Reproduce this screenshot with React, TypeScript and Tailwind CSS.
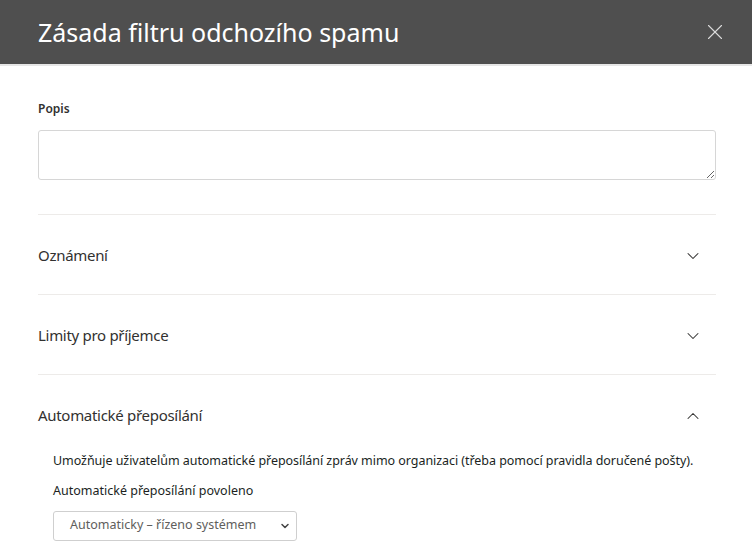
import { ChevronDown, ChevronUp, X } from "lucide-react";

const font = { fontFamily: '"Noto Sans", "Open Sans", sans-serif' };

function Section({ title, open }: { title: string; open?: boolean }) {
  return (
    <div className="flex h-[80px] items-center justify-between border-t border-[#edebe9] pt-[2px]">
      <span className="text-[15px] tracking-[-0.3px] text-[#323130]">{title}</span>
      {open ? (
        <ChevronUp className="mr-[13px] h-5 w-5 text-[#323130]" strokeWidth={1.25} />
      ) : (
        <ChevronDown className="mr-[13px] h-5 w-5 text-[#323130]" strokeWidth={1.25} />
      )}
    </div>
  );
}

export default function App() {
  return (
    <div className="h-[545px] w-[752px] overflow-hidden bg-white" style={font}>
      <div className="flex h-[64px] items-center justify-between bg-[#4f4f4f] pl-[38px] pr-[24px]">
        <h1 className="text-[25px] leading-none text-white">Zásada filtru odchozího spamu</h1>
        <X className="h-[26px] w-[26px] text-[#dcdcdc]" strokeWidth={1} />
      </div>
      <div className="h-[2px] bg-[#e6e6e6]" />

      <div className="pl-[38px] pr-[36px] pt-[34px]">
        <label className="block text-[12px] font-semibold text-[#323130]">Popis</label>
        <textarea className="mt-[12px] block h-[50px] w-full rounded-[3px] border border-[#d6d6d6] outline-none" />

        <div className="mt-[34px]">
          <Section title="Oznámení" />
          <Section title="Limity pro příjemce" />
          <Section title="Automatické přeposílání" open />
        </div>

        <div className="-mt-[2px] pl-[15px]">
          <p className="whitespace-nowrap text-[12.5px] tracking-[-0.05px] text-[#201f1e]">
            Umožňuje uživatelům automatické přeposílání zpráv mimo organizaci (třeba pomocí pravidla doručené pošty).
          </p>
          <p className="mt-[11px] text-[12.5px] text-[#201f1e]">Automatické přeposílání povoleno</p>
          <div className="mt-[10px] flex h-[30px] w-[244px] items-center justify-between rounded-[3px] border border-[#cfcfcf] pl-[16px] pr-[5px]">
            <span className="text-[12.5px] text-[#605e5c]">Automaticky – řízeno systémem</span>
            <ChevronDown className="h-3 w-3 text-[#444]" strokeWidth={3} />
          </div>
        </div>
      </div>
    </div>
  );
}
